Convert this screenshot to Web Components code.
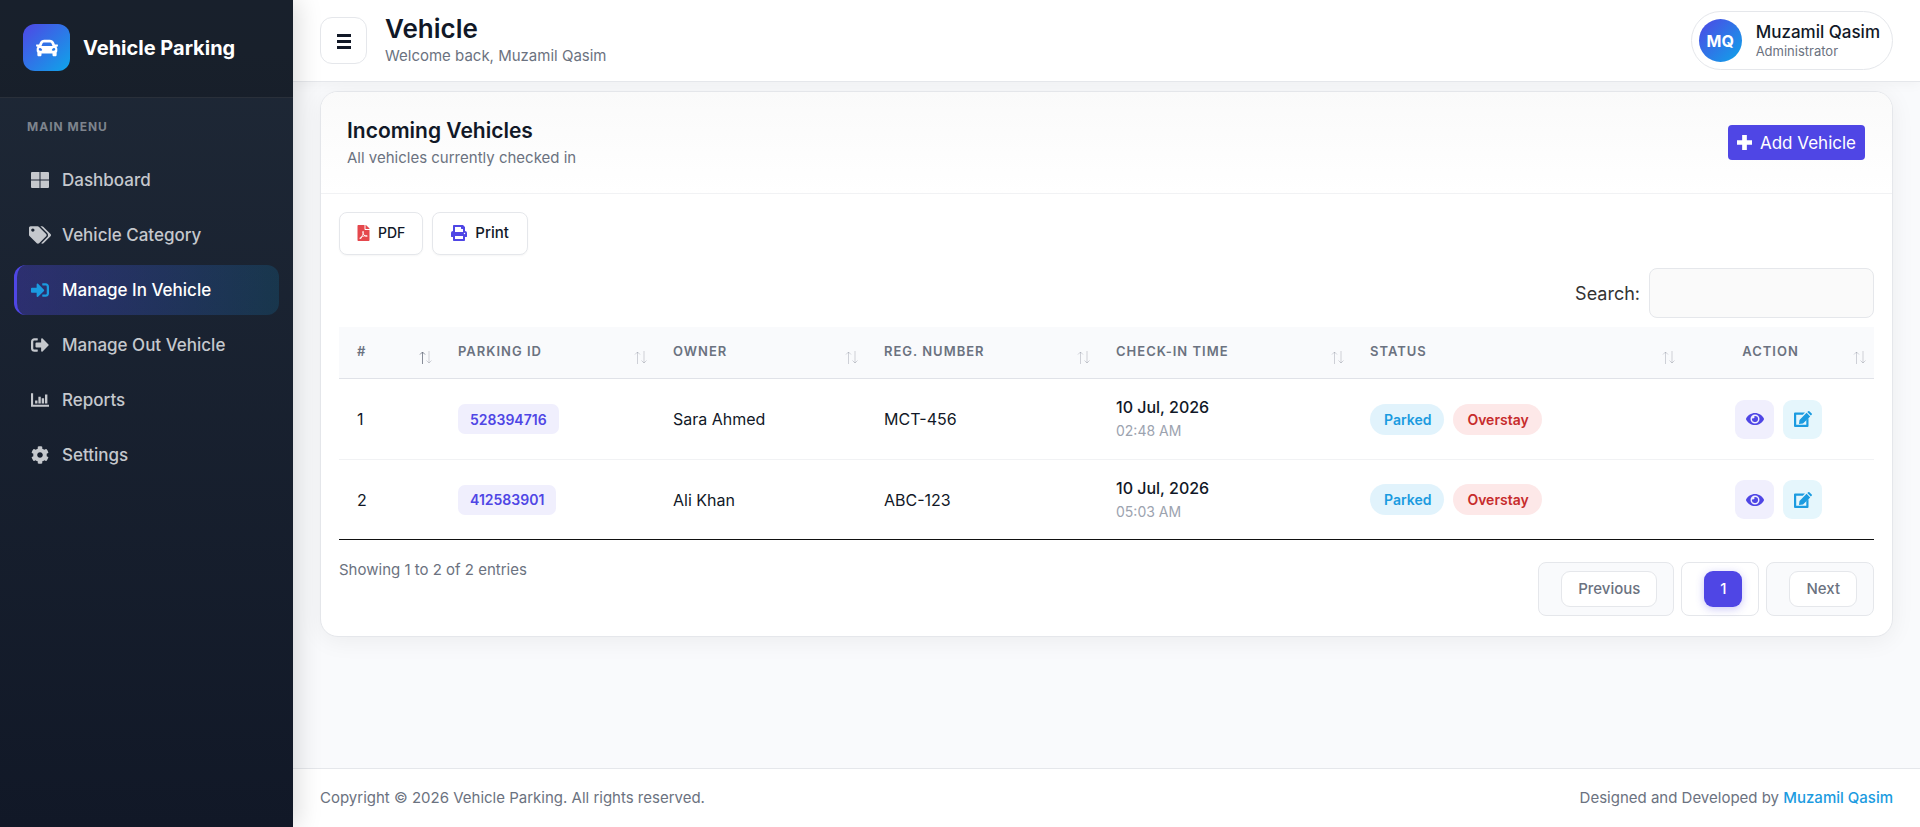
<!DOCTYPE html>
<html lang="en">
<head>
<meta charset="utf-8">
<title>Vehicle Parking</title>
<style>
html, body { margin: 0; }
body { min-height: 100vh; display: flex; font-family: Inter, "Open Sans", sans-serif; color: #111827; background: #f9fafc; }
</style>
</head>
<body>
<parking-app></parking-app>
<script>
const ICONS = {
  grid: ['0 0 18 16', 'M1 0h7.500v7.500H0V1a1 1 0 0 1 1-1zM9.500 0H17a1 1 0 0 1 1 1v6.500H9.500zM0 8.500h8.500V16H1a1 1 0 0 1-1-1zM9.500 8.500H18V15a1 1 0 0 1-1 1H9.500z'],
  tags: ['0 0 640 512', 'M497.941 225.941L286.059 14.059A48 48 0 0 0 252.118 0H48C21.49 0 0 21.49 0 48v204.118a48 48 0 0 0 14.059 33.941l211.882 211.882c18.744 18.745 49.136 18.746 67.882 0l204.118-204.118c18.745-18.745 18.745-49.137 0-67.882zM112 160c-26.51 0-48-21.49-48-48s21.49-48 48-48 48 21.49 48 48-21.49 48-48 48zm513.941 133.823L421.823 497.941c-18.745 18.745-49.137 18.745-67.882 0l-.36-.36L527.64 323.522c16.999-16.999 26.362-39.6 26.362-63.64s-9.362-46.641-26.362-63.64L331.397 0h48.721a48 48 0 0 1 33.941 14.059l211.882 211.882c18.745 18.745 18.745 49.137 0 67.882z'],
  enter: ['0 0 512 512', 'M416 448h-84c-6.6 0-12-5.4-12-12v-40c0-6.6 5.4-12 12-12h84c17.7 0 32-14.3 32-32V160c0-17.7-14.3-32-32-32h-84c-6.6 0-12-5.4-12-12V76c0-6.6 5.4-12 12-12h84c53 0 96 43 96 96v192c0 53-43 96-96 96zm-47-201L201 79c-15-15-41-4.5-41 17v96H24c-13.3 0-24 10.7-24 24v96c0 13.3 10.7 24 24 24h136v96c0 21.500 26 32 41 17l168-168c9.300-9.400 9.300-24.600 0-34z'],
  leave: ['0 0 512 512', 'M497 273L329 441c-15 15-41 4.500-41-17v-96H152c-13.300 0-24-10.700-24-24v-96c0-13.300 10.700-24 24-24h136V88c0-21.400 25.900-32 41-17l168 168c9.300 9.400 9.300 24.600 0 34zM192 436v-40c0-6.600-5.400-12-12-12H96c-17.700 0-32-14.300-32-32V160c0-17.700 14.300-32 32-32h84c6.600 0 12-5.400 12-12V76c0-6.600-5.400-12-12-12H96c-53 0-96 43-96 96v192c0 53 43 96 96 96h84c6.600 0 12-5.400 12-12z'],
  chart: ['0 0 512 512', 'M0 64h60v324h452v60H0zM116 272h68v84h-68zM210 160h68v196h-68zM304 208h68v148h-68zM398 96h68v260h-68z'],
  gear: ['0 0 512 512', 'M487.4 315.7l-42.6-24.6c4.3-23.2 4.3-47 0-70.2l42.6-24.6c4.9-2.8 7.1-8.6 5.5-14-11.1-35.6-30-67.8-54.7-94.6-3.8-4.1-10-5.1-14.8-2.3L380.8 110c-17.9-15.4-38.5-27.3-60.8-35.1V25.8c0-5.6-3.9-10.5-9.4-11.7-36.7-8.2-74.3-7.8-109.2 0-5.5 1.2-9.4 6.1-9.4 11.7V75c-22.2 7.9-42.8 19.8-60.8 35.1L88.7 85.5c-4.9-2.8-11-1.9-14.8 2.3-24.7 26.7-43.6 58.9-54.7 94.6-1.7 5.4.6 11.2 5.5 14L67.3 221c-4.3 23.2-4.3 47 0 70.2l-42.6 24.6c-4.9 2.8-7.1 8.6-5.5 14 11.1 35.6 30 67.8 54.7 94.6 3.8 4.1 10 5.1 14.8 2.3l42.6-24.6c17.9 15.4 38.5 27.3 60.8 35.1v49.2c0 5.6 3.9 10.5 9.4 11.7 36.7 8.2 74.3 7.8 109.2 0 5.5-1.2 9.4-6.1 9.4-11.7v-49.2c22.2-7.9 42.8-19.8 60.8-35.1l42.6 24.6c4.9 2.8 11 1.9 14.8-2.3 24.7-26.7 43.6-58.9 54.7-94.6 1.5-5.5-.7-11.3-5.6-14.1zM256 336c-44.1 0-80-35.9-80-80s35.9-80 80-80 80 35.9 80 80-35.9 80-80 80z'],
  car: ['0 0 512 512', 'M499.99 176h-59.87l-16.64-41.6C406.38 91.63 365.57 64 319.5 64h-127c-46.06 0-86.88 27.63-103.99 70.4L71.87 176H12.01C4.2 176-1.53 183.34.37 190.91l6 24C7.7 220.25 12.5 224 18.01 224h20.07C24.65 235.73 16 252.78 16 272v48c0 16.12 6.16 30.67 16 41.93V416c0 17.67 14.33 32 32 32h32c17.67 0 32-14.33 32-32v-32h256v32c0 17.67 14.33 32 32 32h32c17.67 0 32-14.33 32-32v-54.07c9.84-11.25 16-25.8 16-41.93v-48c0-19.22-8.65-36.27-22.07-48H494c5.51 0 10.31-3.75 11.64-9.09l6-24c1.89-7.57-3.84-14.91-11.65-14.91zm-352.06-17.83c7.29-18.22 24.94-30.17 44.57-30.17h127c19.63 0 37.28 11.95 44.57 30.17L384 208H128l19.93-49.83zM96 319.8c-19.2 0-32-12.76-32-31.9S76.8 256 96 256s48 28.71 48 47.85-28.8 15.95-48 15.95zm320 0c-19.2 0-48 3.19-48-15.95S396.8 256 416 256s32 12.76 32 31.9-12.8 31.9-32 31.9z'],
  bars: ['0 0 16 16', 'M1 1h14v3H1zM1 7h14v3H1zM1 13h14v3H1z'],
  plus: ['0 0 16 16', 'M5.500 0h5v5.500H16v5h-5.500V16h-5v-5.500H0v-5h5.500z'],
  pdf: ['0 0 384 512', 'M181.9 256.1c-5-16-4.9-46.9-2-46.9 8.4 0 7.6 36.9 2 46.9zm-1.7 47.2c-7.7 20.2-17.3 43.3-28.4 62.7 18.3-7 39-17.2 62.9-21.9-12.7-9.6-24.9-23.4-34.5-40.8zM86.1 428.1c0 .8 13.2-5.4 34.9-40.2-6.7 6.3-29.1 24.5-34.9 40.2zM248 160h136v328c0 13.3-10.7 24-24 24H24c-13.3 0-24-10.7-24-24V24C0 10.7 10.7 0 24 0h200v136c0 13.2 10.8 24 24 24zm-8 171.8c-20-12.2-33.3-29-42.7-53.8 4.5-18.5 11.6-46.6 6.2-64.2-4.7-29.4-42.4-26.5-47.8-6.8-5 18.3-.4 44.1 8.1 77-11.6 27.6-28.7 64.6-40.8 85.8-.1 0-.1.1-.2.1-27.1 13.9-73.6 44.5-54.5 68 5.6 6.9 16 10 21.5 10 17.9 0 35.7-18 61.1-61.8 25.8-8.5 54.1-19.1 79-23.2 21.7 11.8 47.1 19.5 64 19.5 29.2 0 31.2-32 19.7-43.4-13.9-13.6-54.3-9.7-73.6-7.2zM377 105L279 7c-4.5-4.5-10.6-7-17-7h-6v128h128v-6.1c0-6.3-2.5-12.4-7-16.9zm-74.1 255.3c4.1-2.7-2.5-11.9-42.8-9 37.1 15.8 42.8 9 42.8 9z'],
  print: ['0 0 512 512', 'M448 192V77.25c0-8.49-3.37-16.62-9.37-22.63L393.37 9.37c-6-6-14.14-9.37-22.63-9.37H96C78.33 0 64 14.33 64 32v160c-35.35 0-64 28.65-64 64v112c0 8.84 7.16 16 16 16h48v96c0 17.67 14.33 32 32 32h320c17.67 0 32-14.33 32-32v-96h48c8.84 0 16-7.16 16-16V256c0-35.35-28.65-64-64-64zm-64 256H128v-96h256v96zm0-224H128V64h192v48c0 8.84 7.16 16 16 16h48v96zm48 72c-13.25 0-24-10.75-24-24 0-13.26 10.75-24 24-24s24 10.74 24 24c0 13.25-10.75 24-24 24z'],
  eye: ['0 0 576 512', 'M572.52 241.4C518.29 135.59 410.93 64 288 64S57.68 135.64 3.48 241.41a32.35 32.35 0 0 0 0 29.19C57.71 376.41 165.07 448 288 448s230.32-71.64 284.52-177.41a32.35 32.35 0 0 0 0-29.19zM288 400a144 144 0 1 1 144-144 143.93 143.93 0 0 1-144 144zm0-240a95.31 95.31 0 0 0-25.31 3.79 47.85 47.85 0 0 1-66.9 66.9A95.78 95.78 0 1 0 288 160z'],
  edit: ['0 0 18 16', 'M1 1.500h10L8.800 3.700H2.200v10.100h10.100V9.500l2.200-2.200V15a1 1 0 0 1-1 1H1a1 1 0 0 1-1-1V2.500a1 1 0 0 1 1-1zM12.600 1.800l3.600 3.600L9 12.500l-4 .5.500-4.100zM13.300 1.100l.9-.9q.6-.5 1.200 0l2.300 2.300q.6.600 0 1.200l-.9.900z']
};

function define(name, css, html) {
  customElements.define(name, class extends HTMLElement {
    constructor() {
      super();
      const template = document.createElement('template');
      template.innerHTML = `<style>*{box-sizing:border-box}${css}</style>${typeof html === 'function' ? html(this) : html}`;
      this.attachShadow({ mode: 'open' }).append(template.content.cloneNode(true));
    }
  });
}

define('app-icon',
  `:host{display:inline-flex;flex:none;width:16px;height:16px} svg{width:100%;height:100%;fill:currentColor}`,
  el => { const [box, d] = ICONS[el.getAttribute('name')]; return `<svg viewBox="${box}" aria-hidden="true"><path d="${d}"/></svg>`; });

define('nav-item',
  `:host{display:block}
   a{display:flex;align-items:center;gap:12px;height:50px;padding:0 13px;border-left:3px solid transparent;border-radius:12px;color:#c5c8cd;text-decoration:none;font-size:17px;font-weight:500}
   span{display:flex;width:20px;justify-content:center}
   app-icon{width:18px;height:18px}
   .tags{width:22px}
   :host([active]) a{color:#fff;border-color:#4f46e5;background:linear-gradient(90deg,rgba(79,70,229,.35),rgba(14,165,233,.15))}
   :host([active]) span{color:#1b9be0}`,
  el => `<a href="#"><span><app-icon name="${el.getAttribute('icon')}" class="${el.getAttribute('icon')}"></app-icon></span><slot></slot></a>`);

define('side-bar',
  `:host{display:flex;flex-direction:column;flex:none;width:293px;position:relative;z-index:2;background:linear-gradient(180deg,#1f2937,#111827);box-shadow:4px 0 24px rgba(0,0,0,.15)}
   header{display:flex;align-items:center;gap:13px;height:98px;padding:0 23px 2px;background:rgba(0,0,0,.2);border-bottom:1px solid rgba(255,255,255,.08)}
   .logo{display:flex;align-items:center;justify-content:center;width:47px;height:47px;border-radius:12px;background:linear-gradient(135deg,#4f46e5,#0ea5e9);color:#fff}
   .logo app-icon{width:22px;height:22px}
   strong{color:#fff;font-size:20px;font-weight:700}
   nav{padding:20px 14px}
   h2{margin:0 0 19px;padding-left:13px;color:#7e848d;font-size:12px;line-height:18px;font-weight:700;letter-spacing:1px}
   .list{display:flex;flex-direction:column;gap:5px}`,
  `<header><div class="logo"><app-icon name="car"></app-icon></div><strong>Vehicle Parking</strong></header>
   <nav><h2>MAIN MENU</h2><div class="list">
   <nav-item icon="grid">Dashboard</nav-item><nav-item icon="tags">Vehicle Category</nav-item><nav-item icon="enter" active>Manage In Vehicle</nav-item><nav-item icon="leave">Manage Out Vehicle</nav-item><nav-item icon="chart">Reports</nav-item><nav-item icon="gear">Settings</nav-item></div></nav>`);

define('top-bar',
  `:host{display:flex;align-items:center;justify-content:space-between;height:82px;padding:0 27px;background:#fff;border-bottom:1px solid #e5e7eb;box-shadow:0 2px 12px rgba(0,0,0,.04);position:relative;z-index:1}
   .left{display:flex;align-items:center;gap:18px}
   button{display:flex;align-items:center;justify-content:center;width:47px;height:47px;border:1px solid #e5e7eb;border-radius:12px;background:#fff;color:#111827;padding:0}
   h1{margin:0;font-size:26px;line-height:30px;font-weight:600}
   p{margin:0;color:#6b7280;font-size:15px;line-height:24px}
   .user{display:flex;align-items:center;gap:14px;height:59px;padding:0 12px 0 7px;border:1px solid #e5e7eb;border-radius:30px}
   .avatar{display:flex;align-items:center;justify-content:center;width:43px;height:43px;border-radius:50%;background:linear-gradient(135deg,#4f46e5,#0ea5e9);color:#fff;font-weight:700;font-size:16px}
   .name{font-size:17px;line-height:20px;font-weight:500} .role{color:#6b7280;font-size:13px;line-height:18px}`,
  `<div class="left"><button aria-label="Toggle menu"><app-icon name="bars"></app-icon></button><div><h1>Vehicle</h1><p>Welcome back, Muzamil Qasim</p></div></div>
   <div class="user"><div class="avatar">MQ</div><div><div class="name">Muzamil Qasim</div><div class="role">Administrator</div></div></div>`);

define('panel-card',
  `:host{display:block;background:#fff;border:1px solid #e5e7eb;border-radius:18px;overflow:hidden;box-shadow:0 4px 24px rgba(0,0,0,.06)}
   header{display:flex;align-items:center;justify-content:space-between;height:102px;padding:0 27px 0 26px;border-bottom:1px solid #f1f2f4;background:linear-gradient(180deg,#fafafa,#fff)}
   h2{margin:0;font-size:21px;line-height:30px;font-weight:600} p{margin:0;color:#6b7280;font-size:15px;line-height:24px}
   .body{padding:18px 18px 20px}`,
  `<header><div><h2><slot name="title"></slot></h2><p><slot name="note"></slot></p></div><slot name="action"></slot></header><div class="body"><slot></slot></div>`);

define('add-button',
  `:host{display:block} button{display:flex;align-items:center;gap:8px;height:35px;padding:0 9px;border:0;border-radius:4px;background:#4f46e5;color:#fff;font:400 17px/24px Inter,sans-serif}
   app-icon{width:15px;height:15px}`,
  `<button><app-icon name="plus"></app-icon><slot></slot></button>`);

define('tool-button',
  `:host{display:block} button{display:flex;align-items:center;gap:8px;height:43px;padding:0 17px 2px;border:1px solid #e5e7eb;border-radius:8px;background:#fff;color:#111827;font:500 14px/20px Inter,sans-serif;box-shadow:0 1px 2px rgba(0,0,0,.04)}
   app-icon{color:#4f46e5} .pdf{width:13px;color:#e5484d}
   :host([icon=print]) button{font-size:15px;padding:0 18px 2px}`,
  el => `<button><app-icon name="${el.getAttribute('icon')}" class="${el.getAttribute('icon')}"></app-icon><slot></slot></button>`);

define('search-field',
  `:host{display:flex;justify-content:flex-end} label{display:flex;align-items:center;gap:9px;font-size:18px;color:#333}
   input{width:225px;height:50px;border:1px solid #e5e7eb;border-radius:8px;background:#fafafa;padding:0 12px;font:16px Inter,sans-serif}`,
  `<label>Search: <input type="search"></label>`);

const columns = [['#', 101, 'asc'], ['PARKING ID', 215], ['OWNER', 211], ['REG. NUMBER', 232], ['CHECK-IN TIME', 254], ['STATUS', 331], ['ACTION', 191]];
const rows = [['1', '528394716', 'Sara Ahmed', 'MCT-456', '02:48 AM'], ['2', '412583901', 'Ali Khan', 'ABC-123', '05:03 AM']];
define('vehicle-table',
  `:host{display:block} table{width:100%;table-layout:fixed;border-collapse:separate;border-spacing:0;border-bottom:1px solid #111;font-size:16px}
   th{position:relative;height:52px;padding:0 34px 4px 18px;background:#f9fafc;border-bottom:1px solid #e0e2e8;color:#6b7280;font-size:13px;font-weight:600;letter-spacing:1px;text-align:left}
   th:last-child{text-align:center}
   th svg{position:absolute;right:8px;bottom:14px;width:13px;height:13px;fill:none;stroke:#6b7280;stroke-width:1}
   th path{opacity:.3} th.asc path:first-child{opacity:.8}
   td{height:80px;padding:0 18px;vertical-align:middle} tr + tr td{border-top:1px solid #f1f2f4}
   td:last-child{text-align:center}
   .id{display:inline-flex;align-items:center;height:30px;padding:0 12px;border-radius:7px;background:#f0effd;color:#4f46e5;font-size:14px;font-weight:600}
   .day{font-size:16px;font-weight:500;line-height:24px} .time{color:#9ca3af;font-size:14px;line-height:24px}
   .tags{display:flex;gap:9px} .tag{display:flex;align-items:center;height:31px;padding:0 13px 0 14px;border-radius:16px;font-size:14px;font-weight:600}
   .parked{background:#e1f3fc;color:#1b9be0} .over{background:#fde8e8;color:#c72c2c}
   .acts{display:flex;justify-content:center;gap:9px} .acts button{display:flex;align-items:center;justify-content:center;width:39px;height:39px;padding:0;border:0;border-radius:9px;background:#f0effd;color:#4f46e5}
   .acts .edit{background:#e5f6fc;color:#1b9be0} .acts app-icon{width:18px;height:18px}`,
  `<table><colgroup>${columns.map(c => `<col style="width:${c[1]}px">`).join('')}</colgroup>
   <thead><tr>${columns.map(c => `<th scope="col" class="${c[2] || ''}">${c[0]}<svg viewBox="0 0 13 13" aria-hidden="true"><path d="M3.500 13V1M1 3.500 3.500 1 6 3.500"/><path d="M10 0v12M7.500 9.500 10 12l2.500-2.500"/></svg></th>`).join('')}</tr></thead>
   <tbody>${rows.map(r => `<tr><td>${r[0]}</td><td><span class="id">${r[1]}</span></td><td>${r[2]}</td><td>${r[3]}</td><td><div class="day">10 Jul, 2026</div><div class="time">${r[4]}</div></td><td><div class="tags"><span class="tag parked">Parked</span><span class="tag over">Overstay</span></div></td><td><div class="acts"><button aria-label="View"><app-icon name="eye"></app-icon></button><button class="edit" aria-label="Edit"><app-icon name="edit"></app-icon></button></div></td></tr>`).join('')}</tbody></table>`);

define('page-nav',
  `:host{display:flex;gap:7px} span{display:flex;padding:8px 16px 8px 22px;border:1px solid #e5e7eb;border-radius:8px;background:#f9fafc}
   button{height:36px;padding:0 16px;border:1px solid #e5e7eb;border-radius:9px;background:#fff;color:#6b7280;font:500 15px/20px Inter,sans-serif}
   .now{background:#fff} .now button{width:38px;padding:0;border:0;background:#4f46e5;color:#fff;box-shadow:0 2px 8px rgba(79,70,229,.3)}`,
  `<span><button>Previous</button></span><span class="now"><button aria-current="page">1</button></span><span><button>Next</button></span>`);

define('parking-app',
  `:host{display:flex;flex:1;min-width:0}
   .page{display:flex;flex-direction:column;flex:1;min-width:0}
   main{flex:1;padding:9px 27px 27px}
   .tools{display:flex;gap:9px;margin-bottom:13px}
   vehicle-table{margin-top:9px}
   .foot{display:flex;justify-content:space-between;align-items:flex-start;margin-top:22px;color:#6b7280;font-size:15px;line-height:15px}
   footer{display:flex;align-items:center;justify-content:space-between;height:59px;padding:0 27px 2px;border-top:1px solid #e5e7eb;background:#fff;color:#6b7280;font-size:15px}
   footer a{color:#1b9be0;font-weight:500;text-decoration:none}`,
  `<side-bar></side-bar><div class="page"><top-bar></top-bar>
   <main><panel-card><span slot="title">Incoming Vehicles</span><span slot="note">All vehicles currently checked in</span><add-button slot="action">Add Vehicle</add-button>
   <div class="tools"><tool-button icon="pdf">PDF</tool-button><tool-button icon="print">Print</tool-button></div>
   <search-field></search-field><vehicle-table></vehicle-table>
   <div class="foot"><div>Showing 1 to 2 of 2 entries</div><page-nav></page-nav></div></panel-card></main>
   <footer><div>Copyright © 2026 Vehicle Parking. All rights reserved.</div><div>Designed and Developed by <a href="#">Muzamil Qasim</a></div></footer></div>`);
</script>
</body>
</html>
